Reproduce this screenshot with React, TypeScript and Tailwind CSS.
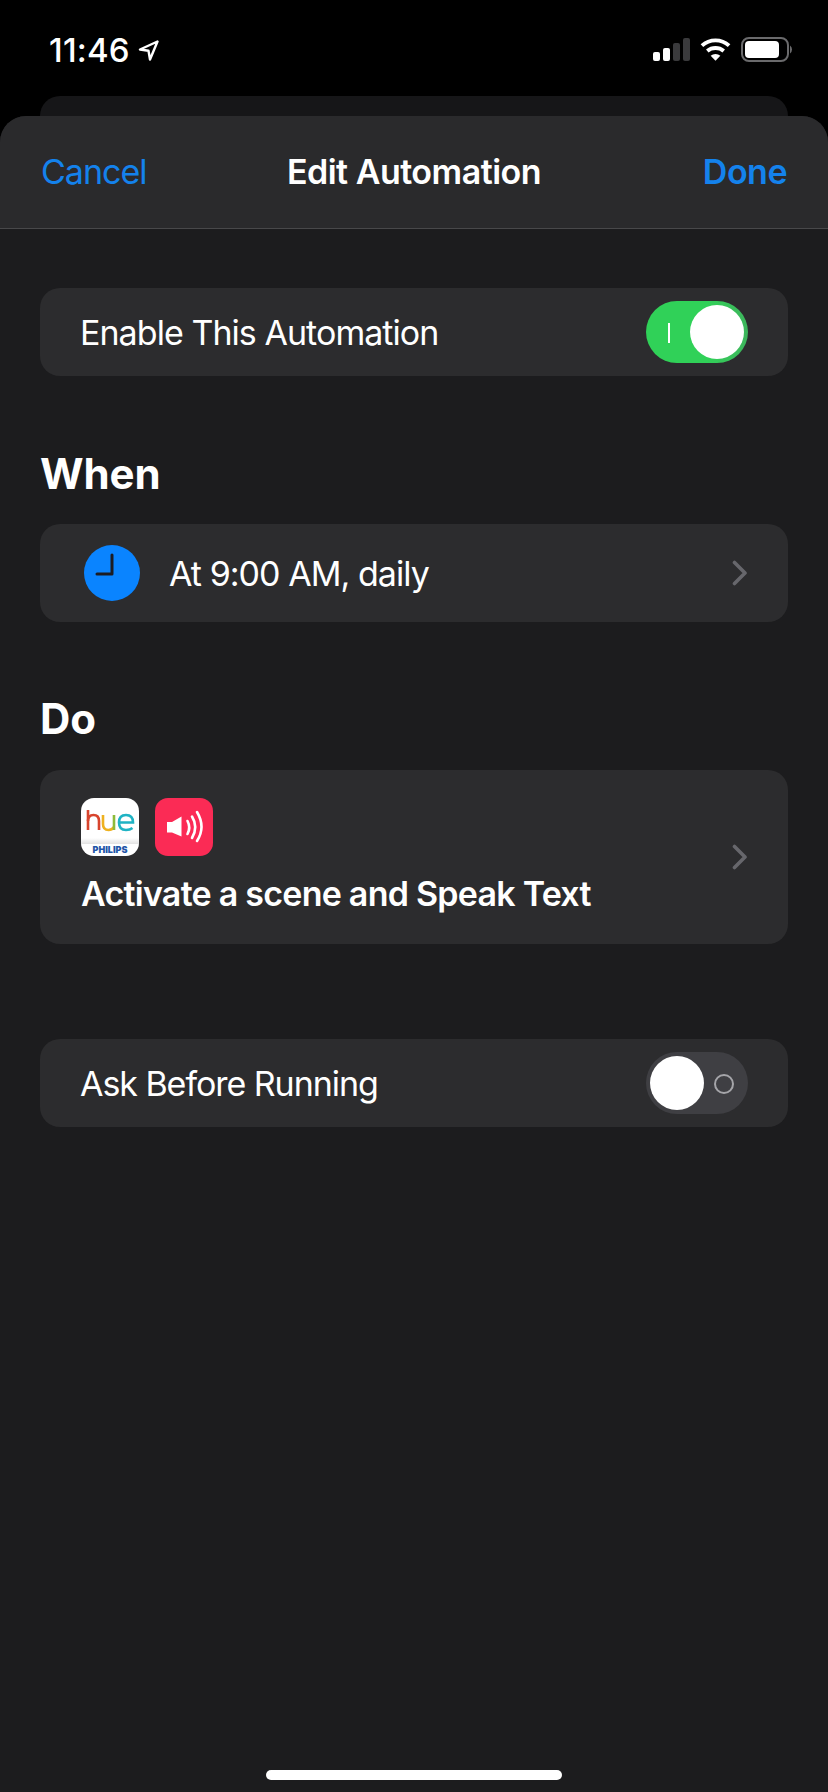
const FONT = "font-['Inter','Liberation_Sans',sans-serif]";

function Chevron() {
  return (
    <svg width="16" height="26" viewBox="0 0 16 26" className="shrink-0">
      <path d="M2.5 2.5 L13 13 L2.5 23.5" fill="none" stroke="#67676c" strokeWidth="3.6" strokeLinecap="round" strokeLinejoin="round" />
    </svg>
  );
}

function StatusBar() {
  return (
    <div className="h-[96px] flex items-start justify-between pl-[49px] pr-[34px] pt-[32px]">
      <div className="flex items-center gap-[8px]">
        <span className="text-[33px] leading-[36px] font-medium text-white tracking-[0.2px]">11:46</span>
        <svg width="21" height="21" viewBox="0 0 21 21">
          <path d="M19.5 1.5 L2 9.5 L10.5 10.8 L12 19.5 Z" fill="none" stroke="#fff" strokeWidth="2.4" strokeLinejoin="round" />
        </svg>
      </div>
      <div className="flex items-start gap-[10px] pt-[6px]">
        <svg width="37" height="23" viewBox="0 0 37 23">
          <rect x="0" y="14" width="7" height="9" rx="2" fill="#fff" />
          <rect x="10" y="10" width="7" height="13" rx="2" fill="#fff" />
          <rect x="20" y="5" width="7" height="18" rx="2" fill="#3a3a3c" />
          <rect x="30" y="0" width="7" height="23" rx="2" fill="#3a3a3c" />
        </svg>
        <svg width="31" height="24" viewBox="0 0 32 24" className="mt-[-1px]">
          <path d="M2 8.5 A21 21 0 0 1 30 8.5" fill="none" stroke="#fff" strokeWidth="4" />
          <path d="M7.5 14 A13.5 13.5 0 0 1 24.5 14" fill="none" stroke="#fff" strokeWidth="4" />
          <path d="M11 19 L16 24 L21 19 A7.5 7.5 0 0 0 11 19 Z" fill="#fff" />
        </svg>
        <svg width="53" height="25" viewBox="0 0 53 25" className="mt-[-1px]">
          <rect x="1" y="1" width="46" height="23" rx="7" fill="none" stroke="#6a6a6c" strokeWidth="2" />
          <rect x="4" y="4" width="34" height="17" rx="4" fill="#fff" />
          <path d="M49 8.5 A5 5 0 0 1 49 16.5 Z" fill="#6a6a6c" />
        </svg>
      </div>
    </div>
  );
}

function OnSwitch() {
  return (
    <div className="relative w-[102px] h-[62px] rounded-full bg-gradient-to-r from-[#30d158] from-60% to-[#3db55c]">
      <div className="absolute left-[22px] top-[22px] w-[2px] h-[20px] bg-white" />
      <div className="absolute right-[4px] top-[4px] w-[54px] h-[54px] rounded-full bg-white" />
    </div>
  );
}

function OffSwitch() {
  return (
    <div className="relative w-[102px] h-[62px] rounded-full bg-[#3f3f43]">
      <div className="absolute left-[4px] top-[4px] w-[54px] h-[54px] rounded-full bg-white" />
      <div className="absolute left-[68px] top-[22px] w-[20px] h-[20px] rounded-full border-2 border-[#a5a5a9]" />
    </div>
  );
}

function SectionTitle({ children, className }: { children: string; className: string }) {
  return <h2 className={`text-[42px] leading-[48px] font-bold text-white px-[40px] tracking-[-0.1px] ${className}`}>{children}</h2>;
}

function HueIcon() {
  return (
    <div className="relative w-[58px] h-[58px] rounded-[13px] bg-white overflow-hidden">
      <svg width="58" height="46" viewBox="0 0 58 46" className="absolute left-0 top-0">
        <path d="M7 12 V32" stroke="#d8452e" strokeWidth="2.6" fill="none" />
        <path d="M7 23 Q7 17 12.5 17 Q18 17 18 23 V32" stroke="#d8452e" strokeWidth="2.6" fill="none" />
        <path d="M22 17 V26 Q22 32 27.5 32 Q31 32 33 29" stroke="#eeb11f" strokeWidth="2.6" fill="none" />
        <path d="M33 17 V32" stroke="#8dbb3a" strokeWidth="2.6" fill="none" />
        <path d="M38 24.5 H52 Q52 17 45 17 Q38 17 38 24.5 Q38 32 45 32 Q49 32 51.5 30" stroke="#1fb3c4" strokeWidth="2.6" fill="none" />
      </svg>
      <div className="absolute left-0 right-0 top-[40px] h-[6px] bg-gradient-to-b from-white to-[#e2e2e2]" />
      <div className="absolute left-0 right-0 top-[47px] text-center text-[9px] leading-[10px] font-black text-[#1f56a8]">PHILIPS</div>
    </div>
  );
}

function SpeakerIcon() {
  return (
    <div className="w-[58px] h-[58px] rounded-[13px] bg-[#fb2b55]">
      <svg width="58" height="58" viewBox="0 0 58 58">
        <path d="M12 24 H17 L26.5 18.5 V38.5 L17 34.5 H12 Z" fill="#fff" />
        <path d="M32.5 23 Q36 29.5 32.5 36" stroke="#fff" strokeWidth="2.6" fill="none" strokeLinecap="round" />
        <path d="M37 18.5 Q43.5 29 37 40" stroke="#fff" strokeWidth="2.6" fill="none" strokeLinecap="round" />
        <path d="M42 14 Q51 29 42 43" stroke="#fff" strokeWidth="2.6" fill="none" strokeLinecap="round" />
      </svg>
    </div>
  );
}

export default function App() {
  return (
    <div className={`${FONT} w-[828px] h-[1792px] bg-black flex flex-col overflow-hidden`}>
      <StatusBar />
      <div className="h-[20px] mx-[40px] rounded-t-[24px] bg-[#161618] shrink-0" />
      <div className="flex-1 rounded-t-[26px] bg-[#1c1c1e] flex flex-col relative">
        <header className="h-[113px] shrink-0 rounded-t-[26px] bg-[#2a2a2c] border-b border-[#48484a] flex items-center justify-between pl-[41px] pr-[41px] pb-[2px] relative">
          <span className="text-[34px] text-[#1482ec] tracking-[-1px]">Cancel</span>
          <span className="absolute left-0 right-0 text-center text-[34px] font-semibold text-white tracking-[-0.5px]">Edit Automation</span>
          <span className="text-[34px] font-semibold text-[#1482ec] tracking-[-0.5px]">Done</span>
        </header>

        <section className="mt-[59px] mx-[40px] h-[88px] rounded-[20px] bg-[#2c2c2e] flex items-center justify-between pl-[40px] pr-[40px]">
          <span className="text-[34px] text-white tracking-[-0.95px]">Enable This Automation</span>
          <OnSwitch />
        </section>

        <SectionTitle className="mt-[74px]">When</SectionTitle>
        <section className="mt-[26px] mx-[40px] h-[98px] rounded-[20px] bg-[#2c2c2e] flex items-center justify-between pl-[44px] pr-[40px]">
          <div className="flex items-center gap-[29px]">
            <svg width="56" height="56" viewBox="0 0 56 56">
              <circle cx="28" cy="28" r="28" fill="#0a84ff" />
              <path d="M28 10 V29 H13" fill="none" stroke="#1c1c22" strokeWidth="3" strokeLinecap="round" strokeLinejoin="round" />
            </svg>
            <span className="text-[34px] text-white tracking-[-0.95px]">At 9:00 AM, daily</span>
          </div>
          <Chevron />
        </section>

        <SectionTitle className="mt-[73px]">Do</SectionTitle>
        <section className="mt-[27px] mx-[40px] h-[174px] rounded-[20px] bg-[#2c2c2e] flex items-center justify-between pl-[41px] pr-[40px]">
          <div className="flex flex-col gap-[18px] pb-[3px]">
            <div className="flex gap-[16px]">
              <HueIcon />
              <SpeakerIcon />
            </div>
            <span className="text-[34px] leading-[40px] font-semibold text-white tracking-[-0.75px]">Activate a scene and Speak Text</span>
          </div>
          <Chevron />
        </section>

        <section className="mt-[95px] mx-[40px] h-[88px] rounded-[20px] bg-[#2c2c2e] flex items-center justify-between pl-[40px] pr-[40px]">
          <span className="text-[34px] text-white tracking-[-1.05px]">Ask Before Running</span>
          <OffSwitch />
        </section>

        <div className="absolute bottom-[12px] left-[266px] w-[296px] h-[10px] rounded-full bg-white" />
      </div>
    </div>
  );
}
